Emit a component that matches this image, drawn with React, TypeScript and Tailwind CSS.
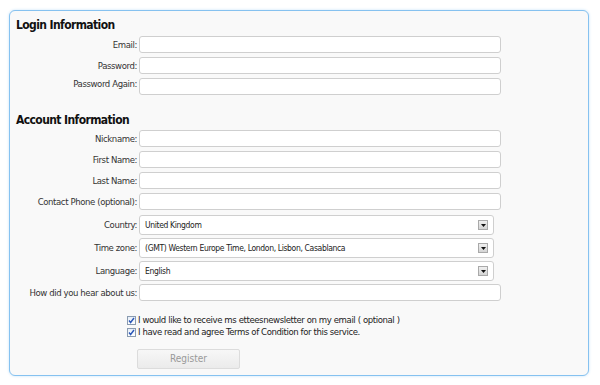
import React from "react";

const font = { fontFamily: '"DejaVu Sans", Verdana, sans-serif' };

function TextRow({ label, top = false }: { label: string; top?: boolean }) {
  return (
    <div className={`flex ${top ? "items-start" : "items-center"}`}>
      <label className="w-[127px] shrink-0 whitespace-nowrap text-right text-[9.5px] leading-[12px] tracking-[-0.4px] text-[#333]">{label}</label>
      <input
        type="text"
        className="ml-[2px] h-[17px] w-[362px] rounded-[3px] border border-[#cfcfcf] bg-white outline-none"
      />
    </div>
  );
}

function SelectRow({ label, value }: { label: string; value: string }) {
  return (
    <div className="flex items-center">
      <label className="w-[127px] shrink-0 whitespace-nowrap text-right text-[9.5px] leading-[12px] tracking-[-0.4px] text-[#333]">{label}</label>
      <div className="ml-[2px] flex h-[20px] w-[355px] items-center justify-between rounded-[3px] border border-[#cfcfcf] bg-white pl-[5px] pr-[5px]">
        <span className="text-[8.5px] tracking-[-0.35px] text-[#222]">{value}</span>
        <span className="flex h-[10px] w-[10px] items-center justify-center border border-[#a9a9a9] bg-gradient-to-b from-[#f0f0f0] to-[#d4d4d4]">
          <svg width="5" height="3" viewBox="0 0 5 3">
            <path d="M0 0h5L2.5 3z" fill="#111" />
          </svg>
        </span>
      </div>
    </div>
  );
}

function Check({ text }: { text: string }) {
  return (
    <div className="flex items-center">
      <span className="flex h-[9px] w-[9px] items-center justify-center border border-[#8a9bb0] bg-gradient-to-b from-[#e6eef8] to-[#fff]">
        <svg width="7" height="7" viewBox="0 0 7 7">
          <path d="M1 3.5l1.6 2L6 1" stroke="#2a57b8" strokeWidth="1.4" fill="none" />
        </svg>
      </span>
      <span className="ml-[2px] whitespace-nowrap text-[9.5px] leading-[12px] tracking-[-0.4px] text-[#222]">{text}</span>
    </div>
  );
}

export default function App() {
  return (
    <div className="h-[385px] w-[600px] bg-white pl-[9px] pt-[10px] font-stretch-condensed" style={font}>
      <div className="h-[366px] w-[580px] rounded-[6px] border border-[#86c2f0] bg-[#f9f9f9] pt-[5px] shadow-[0_0_3px_#c6e2f8]">
        <h2 className="pl-[6px] text-[12px] font-bold leading-[18px] tracking-[-0.6px] text-[#111]">Login Information</h2>
        <div className="mt-[2px] flex flex-col gap-[4px]">
          <TextRow label="Email:" />
          <TextRow label="Password:" />
          <TextRow label="Password Again:" top />
        </div>

        <h2 className="mt-[16px] pl-[6px] text-[12px] font-bold leading-[18px] tracking-[-0.6px] text-[#111]">Account Information</h2>
        <div className="mt-[1px] flex flex-col gap-[4px]">
          <TextRow label="Nickname:" />
          <TextRow label="First Name:" />
          <TextRow label="Last Name:" />
          <TextRow label="Contact Phone (optional):" />
        </div>
        <div className="mt-[5px] flex flex-col gap-[3px]">
          <SelectRow label="Country:" value="United Kingdom" />
          <SelectRow label="Time zone:" value="(GMT) Western Europe Time, London, Lisbon, Casablanca" />
          <SelectRow label="Language:" value="English" />
          <TextRow label="How did you hear about us:" />
        </div>

        <div className="mt-[13px] pl-[117px]">
          <Check text="I would like to receive ms etteesnewsletter on my email ( optional )" />
          <Check text="I have read and agree Terms of Condition for this service." />
        </div>

        <div className="mt-[7px] pl-[127px]">
          <button className="h-[20px] w-[103px] rounded-[2px] border border-[#dcdcdc] bg-gradient-to-b from-[#f7f7f7] to-[#ebebeb] text-[10px] text-[#999]">
            Register
          </button>
        </div>
      </div>
    </div>
  );
}
